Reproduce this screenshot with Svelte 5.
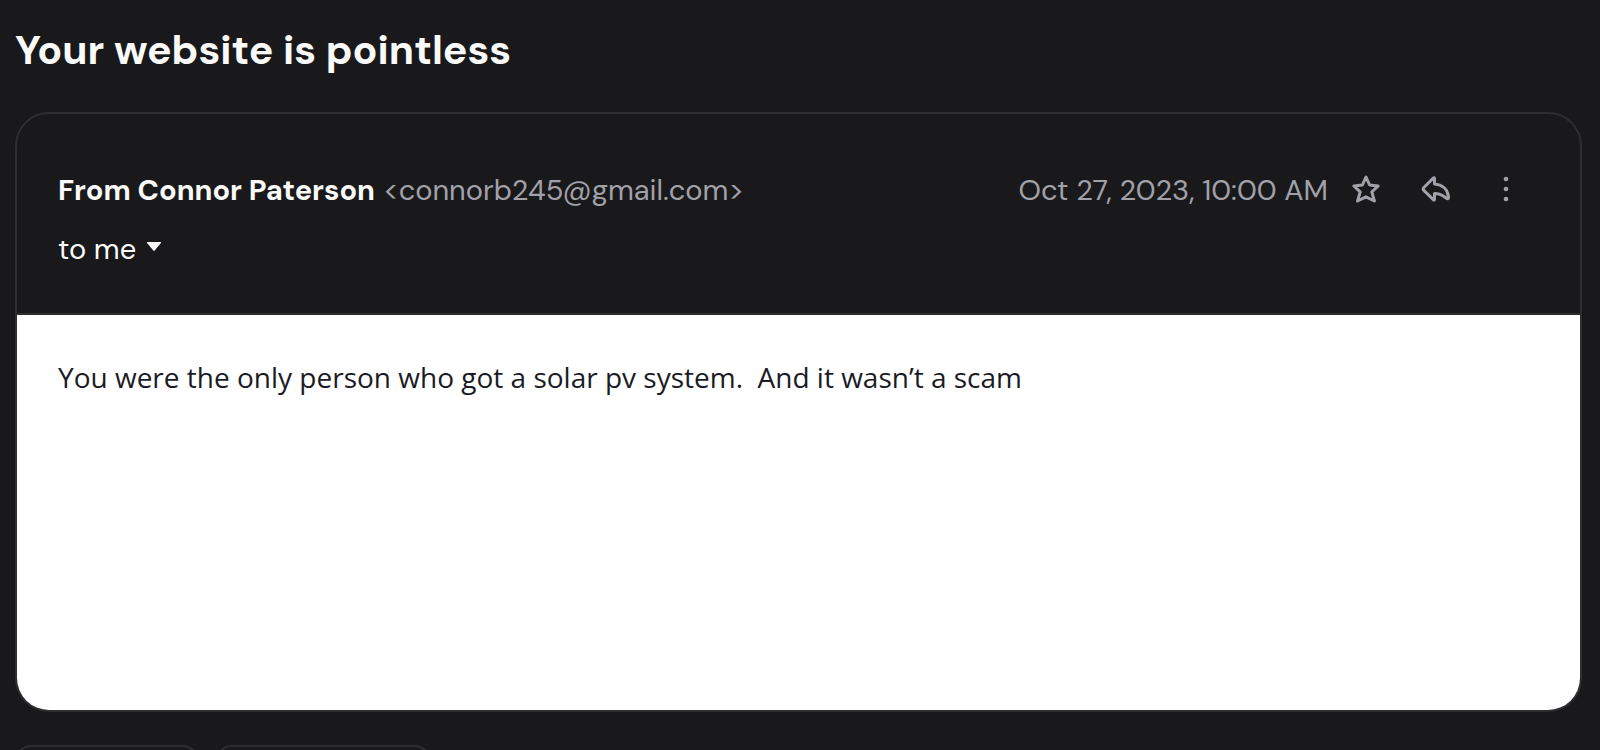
<script lang="ts">
  const message = {
    subject: 'Your website is pointless',
    sender: 'Connor Paterson',
    address: 'connorb245@gmail.com',
    date: 'Oct 27, 2023, 10:00 AM',
    body: 'You were the only person who got a solar pv system.\u00a0 And it wasn’t a scam',
  };

  let starred = $state(false);
</script>

<main class="thread">
  <h1>{message.subject}</h1>

  <article class="card">
    <header>
      <div class="people">
        <div class="from">
          <strong>From {message.sender}</strong>
          <span class="muted">&lt;{message.address}&gt;</span>
        </div>
        <button class="recipients">
          to me
          <svg width="16" height="14" viewBox="0 0 16 14" aria-hidden="true">
            <path d="M1.500 0h13q1.200 0 .4 1L8.700 8.500q-.7.8-1.400 0L1.100 1q-.8-1 .4-1z" fill="currentColor" />
          </svg>
        </button>
      </div>

      <div class="tools">
        <time class="muted" datetime="2023-10-27T10:00">{message.date}</time>
        <button class="icon" aria-label="Star" aria-pressed={starred} onclick={() => (starred = !starred)}>
          <svg width="32" height="32" viewBox="0 1 32 32" fill={starred ? 'currentColor' : 'none'}>
            <path
              d="M16 4L19.600 12L28.200 13L21.800 18.800L24.400 28L16 23.800L7.600 28L10.200 18.800L3.800 13L12.400 12Z"
              stroke="currentColor"
              stroke-width="3"
              stroke-linejoin="round"
            />
          </svg>
        </button>
        <button class="icon" aria-label="Reply">
          <svg width="32" height="32" viewBox="0 1 32 32" fill="none">
            <path
              d="M14.500 5.500q0-1.500-1.200-.4L3.600 14.800q-1 1.200 0 2.400l9.700 9.400q1.200 1.100 1.200-.4V20.500c5 0 8 1.500 11.500 4.500q2.800 1.800 2.500-1.200C27.500 16 22 11.500 14.500 11z"
              stroke="currentColor"
              stroke-width="3"
              stroke-linejoin="round"
            />
          </svg>
        </button>
        <button class="icon" aria-label="More">
          <svg width="32" height="32" viewBox="0 1 32 32" fill="currentColor">
            <circle cx="16" cy="6" r="2.300" />
            <circle cx="16" cy="16" r="2.300" />
            <circle cx="16" cy="26" r="2.300" />
          </svg>
        </button>
      </div>
    </header>

    <div class="body">
      <p>{message.body}</p>
    </div>
  </article>

  <div class="actions">
    <button class="reply" aria-label="Reply"></button>
    <button class="forward" aria-label="Forward"></button>
  </div>
</main>

<style>
  :global(body) {
    background: #19191b;
  }

  .thread {
    box-sizing: border-box;
    height: 100vh;
    padding: 24px 18px 0 15px;
    overflow: hidden;
    background: #19191b;
    color: #fafafa;
    font-family: 'DM Sans', Inter, 'Liberation Sans', sans-serif;
    font-size: 29px;
    line-height: 40px;
  }

  h1 {
    margin: 0 0 36px;
    font-size: 41px;
    font-weight: 700;
    line-height: 52px;
  }

  button {
    padding: 0;
    border: none;
    background: none;
    color: inherit;
    font: inherit;
    cursor: pointer;
  }

  .card {
    overflow: hidden;
    border: 2px solid #2e2e30;
    border-radius: 34px;
  }

  header {
    display: flex;
    justify-content: space-between;
    align-items: flex-start;
    padding: 56px 58px 44px 41px;
    border-bottom: 2px solid #2e2e30;
  }

  .people {
    display: flex;
    flex-direction: column;
    align-items: flex-start;
    gap: 19px;
  }

  .muted {
    color: #a1a1aa;
  }

  .recipients {
    display: flex;
    align-items: center;
    gap: 10px;
  }

  .tools {
    display: flex;
    align-items: center;
    gap: 38px;
    color: #a1a1aa;
  }

  .tools time {
    margin-right: -16px;
  }

  .icon {
    display: flex;
  }

  .body {
    min-height: 395px;
    box-sizing: border-box;
    padding: 42px 41px;
    background: #fff;
    color: #1b1b25;
    font-family: 'Segoe UI', 'Open Sans', 'Noto Sans', sans-serif;
    font-size: 28px;
  }

  .body p {
    margin: 0;
  }

  .actions {
    display: flex;
    gap: 17px;
    margin-top: 33px;
  }

  .actions button {
    height: 72px;
    border: 2px solid #2e2e30;
    border-radius: 16px;
  }

  .reply {
    width: 184px;
  }

  .forward {
    width: 215px;
  }
</style>
